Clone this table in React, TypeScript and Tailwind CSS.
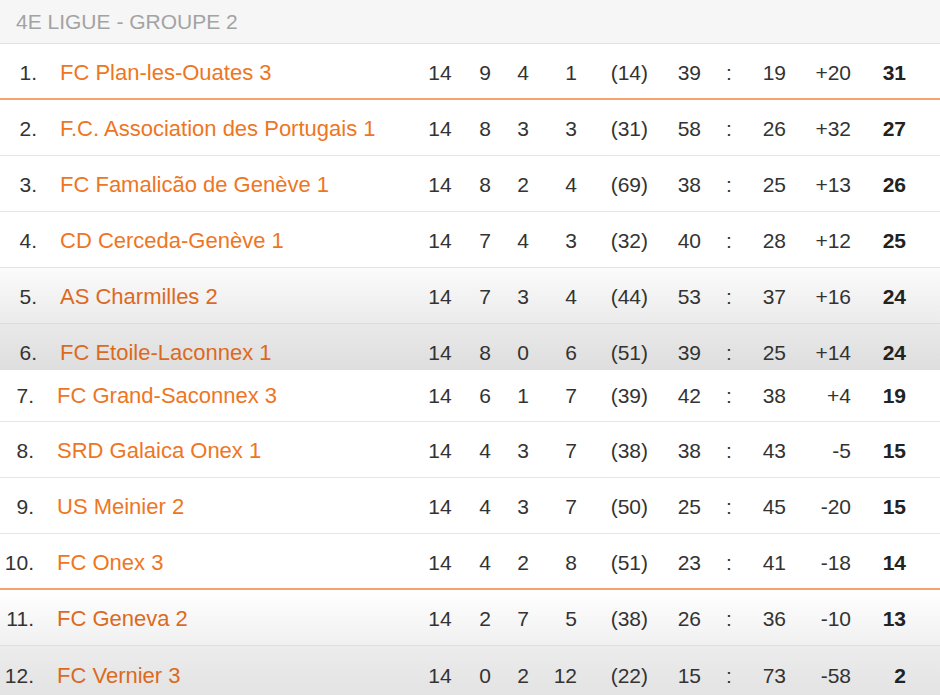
interface Team {
  rank: number;
  name: string;
  played: number;
  won: number;
  drawn: number;
  lost: number;
  fair: number;
  gf: number;
  ga: number;
  gd: string;
  pts: number;
}

const teams: Team[] = [
  { rank: 1, name: "FC Plan-les-Ouates 3", played: 14, won: 9, drawn: 4, lost: 1, fair: 14, gf: 39, ga: 19, gd: "+20", pts: 31 },
  { rank: 2, name: "F.C. Association des Portugais 1", played: 14, won: 8, drawn: 3, lost: 3, fair: 31, gf: 58, ga: 26, gd: "+32", pts: 27 },
  { rank: 3, name: "FC Famalicão de Genève 1", played: 14, won: 8, drawn: 2, lost: 4, fair: 69, gf: 38, ga: 25, gd: "+13", pts: 26 },
  { rank: 4, name: "CD Cerceda-Genève 1", played: 14, won: 7, drawn: 4, lost: 3, fair: 32, gf: 40, ga: 28, gd: "+12", pts: 25 },
  { rank: 5, name: "AS Charmilles 2", played: 14, won: 7, drawn: 3, lost: 4, fair: 44, gf: 53, ga: 37, gd: "+16", pts: 24 },
  { rank: 6, name: "FC Etoile-Laconnex 1", played: 14, won: 8, drawn: 0, lost: 6, fair: 51, gf: 39, ga: 25, gd: "+14", pts: 24 },
  { rank: 7, name: "FC Grand-Saconnex 3", played: 14, won: 6, drawn: 1, lost: 7, fair: 39, gf: 42, ga: 38, gd: "+4", pts: 19 },
  { rank: 8, name: "SRD Galaica Onex 1", played: 14, won: 4, drawn: 3, lost: 7, fair: 38, gf: 38, ga: 43, gd: "-5", pts: 15 },
  { rank: 9, name: "US Meinier 2", played: 14, won: 4, drawn: 3, lost: 7, fair: 50, gf: 25, ga: 45, gd: "-20", pts: 15 },
  { rank: 10, name: "FC Onex 3", played: 14, won: 4, drawn: 2, lost: 8, fair: 51, gf: 23, ga: 41, gd: "-18", pts: 14 },
  { rank: 11, name: "FC Geneva 2", played: 14, won: 2, drawn: 7, lost: 5, fair: 38, gf: 26, ga: 36, gd: "-10", pts: 13 },
  { rank: 12, name: "FC Vernier 3", played: 14, won: 0, drawn: 2, lost: 12, fair: 22, gf: 15, ga: 73, gd: "-58", pts: 2 },
];

// per-row look: height, background, divider
const rowStyles: Record<number, string> = {
  1: "h-[56px] items-center pt-[4px] bg-white border-b-2 border-[#f5a36b]",
  2: "h-[56px] items-center pt-[3px] bg-white border-b border-[#e6e6e6]",
  3: "h-[56px] items-center pt-[3px] bg-white border-b border-[#e6e6e6]",
  4: "h-[56px] items-center pt-[3px] bg-white border-b border-[#e2e2e2]",
  5: "h-[56px] items-center pt-[3px] bg-gradient-to-b from-[#fbfbfb] to-[#ebebeb] border-b border-[#dcdcdc]",
  6: "h-[46px] items-start pt-[17px] bg-gradient-to-b from-[#e9e9e9] to-[#dedede]",
  7: "h-[52px] items-center pt-[1px] bg-white border-b border-[#e6e6e6]",
  8: "h-[56px] items-center pt-[3px] bg-white border-b border-[#e6e6e6]",
  9: "h-[56px] items-center pt-[3px] bg-white border-b border-[#e6e6e6]",
  10: "h-[56px] items-center pt-[3px] bg-white border-b-2 border-[#f5a36b]",
  11: "h-[56px] items-center pt-[3px] bg-gradient-to-b from-[#ffffff] to-[#f0f0f0] border-b border-[#dedede]",
  12: "h-[56px] items-center pt-[3px] bg-gradient-to-b from-[#ececec] to-[#e2e2e2]",
};

const Row = ({ team }: { team: Team }) => {
  const shifted = team.rank >= 7;
  const shaded = [5, 6, 11, 12].includes(team.rank);
  return (
    <div className={`flex text-[21px] leading-[24px] text-[#333] ${rowStyles[team.rank]}`}>
      <div className={`text-right shrink-0 ${shifted ? "w-[34px]" : "w-[37px]"}`}>{team.rank}.</div>
      <div
        className={`shrink-0 text-[22px] ${shifted ? "w-[386px] pl-[23px]" : "w-[383px] pl-[23px]"} ${
          shaded ? "text-[#dc6a1e]" : "text-[#ee7623]"
        }`}
      >
        {team.name}
      </div>
      <div className="w-[40px] text-center">{team.played}</div>
      <div className="w-[50px] text-center">{team.won}</div>
      <div className="w-[26px] text-center">{team.drawn}</div>
      <div className="w-[41px] text-right">{team.lost}</div>
      <div className="w-[71px] text-right">({team.fair})</div>
      <div className="w-[53px] text-right">{team.gf}</div>
      <div className="w-[56px] text-center">:</div>
      <div className="w-[29px] text-right">{team.ga}</div>
      <div className="w-[65px] text-right">{team.gd}</div>
      <div className="w-[55px] text-right font-bold text-[#222]">{team.pts}</div>
    </div>
  );
};

export default function App() {
  return (
    <div className="w-[940px] h-[695px] overflow-hidden bg-white" style={{ fontFamily: '"Liberation Sans", Arial, sans-serif' }}>
      <div className="h-[44px] flex items-center pl-[16px] bg-[#f6f6f6] border-b border-[#e2e2e2] text-[21px] text-[#a3a3a3]">
        4E LIGUE - GROUPE 2
      </div>
      {teams.map((team) => (
        <Row key={team.rank} team={team} />
      ))}
    </div>
  );
}
